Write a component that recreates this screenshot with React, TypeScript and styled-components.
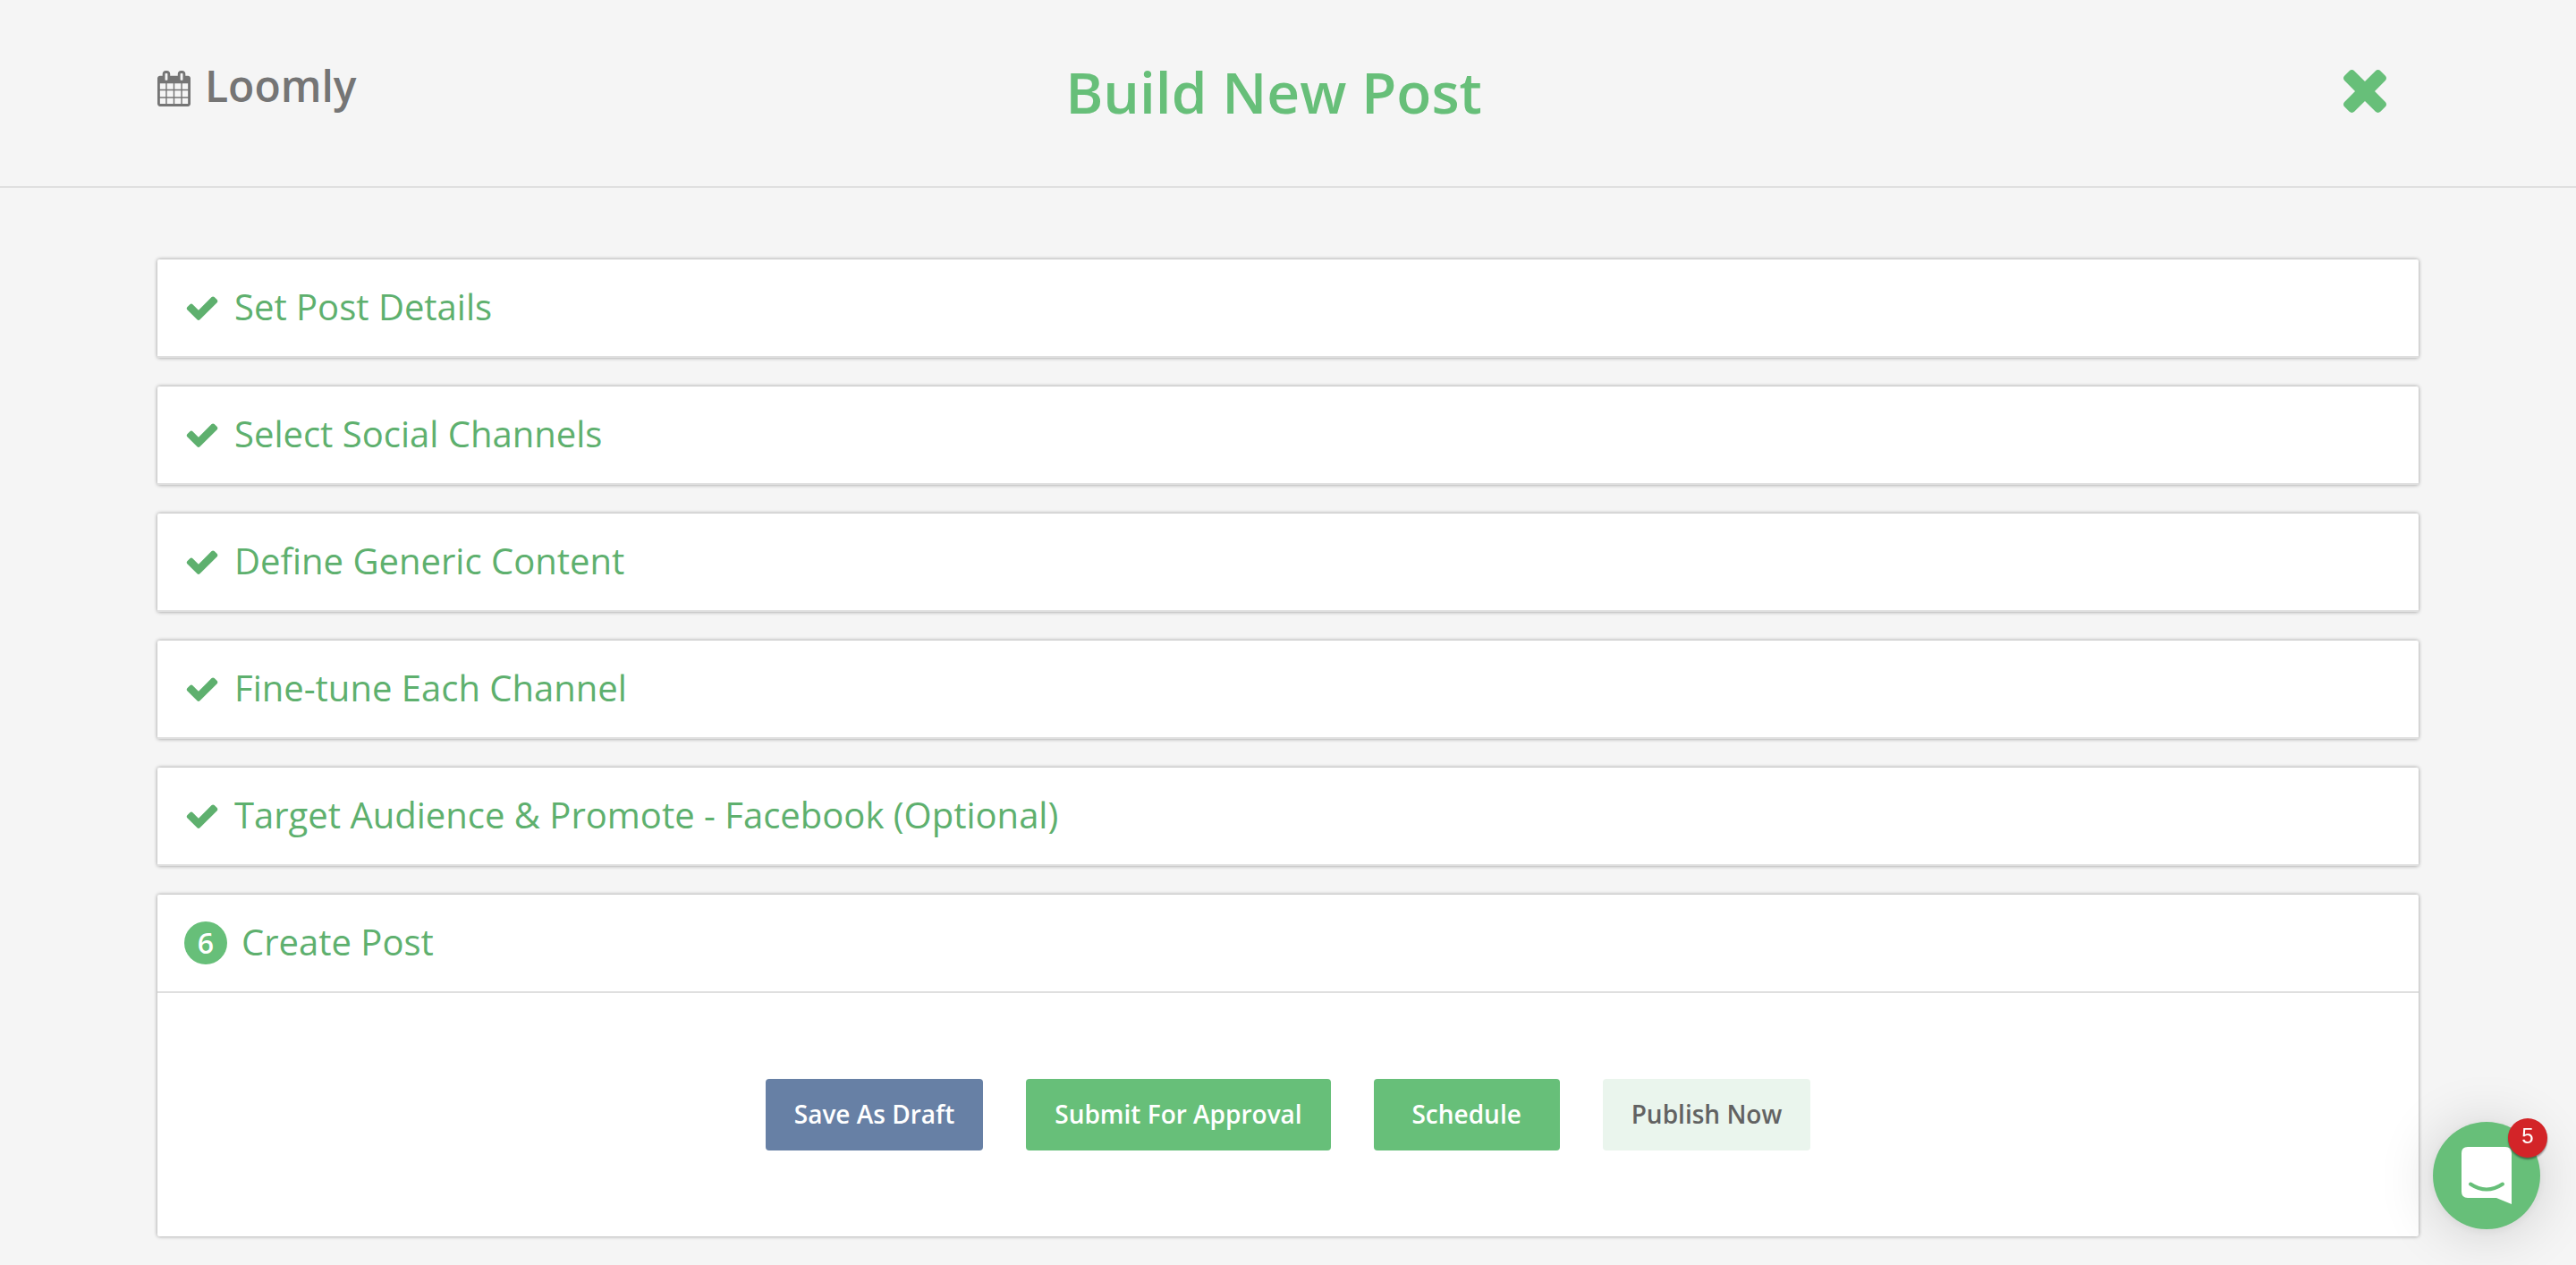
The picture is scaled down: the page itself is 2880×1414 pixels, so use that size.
import React from "react";
import styled, { createGlobalStyle } from "styled-components";

const GlobalStyle = createGlobalStyle`
  *, *::before, *::after { box-sizing: border-box; }
  body {
    margin: 0;
    background: #f5f5f5;
    font-family: "Open Sans", "Noto Sans", sans-serif;
    color: #5f5f5f;
  }
`;

const Header = styled.header`
  display: grid;
  grid-template-columns: 1fr auto 1fr;
  align-items: center;
  height: 210px;
  padding: 0 208px 4px 176px;
  border-bottom: 2px solid #dfdfdf;
`;

const Brand = styled.a`
  display: flex;
  align-items: center;
  gap: 16px;
  padding-bottom: 12px;
  font-size: 48px;
  line-height: 64px;
  font-weight: 600;
  color: #757575;
  text-decoration: none;

  svg {
    margin-top: 6px;
  }
`;

const Title = styled.h1`
  margin: 0;
  padding-top: 2px;
  font-size: 64px;
  line-height: 88px;
  font-weight: 600;
  color: #67bf79;
`;

const CloseButton = styled.button`
  justify-self: end;
  display: flex;
  padding: 0 4px;
  border: 0;
  background: none;
  color: #67bf79;
  cursor: pointer;
`;

const Steps = styled.main`
  display: flex;
  flex-direction: column;
  gap: 32px;
  padding: 80px 176px 32px;
`;

const Card = styled.section`
  background: #fff;
  border-radius: 2px;
  box-shadow: 0 0 4px rgba(0, 0, 0, 0.4);
`;

const StepHeader = styled.h2`
  display: flex;
  align-items: center;
  gap: 16px;
  height: 110px;
  margin: 0;
  padding: 0 30px;
  border-bottom: 2px solid #dfdfdf;
  font-size: 40px;
  line-height: 56px;
  font-weight: 400;
  color: #5eb06e;
`;

const StepLabel = styled.span`
  padding-bottom: 2px;
`;

const StepNumber = styled.span`
  display: flex;
  align-items: center;
  justify-content: center;
  width: 48px;
  height: 48px;
  border-radius: 50%;
  background: #67bf79;
  color: #fff;
  font-size: 32px;
  line-height: 48px;
  font-weight: 600;
`;

const Actions = styled.div`
  display: flex;
  justify-content: center;
  gap: 48px;
  padding: 96px 32px;
`;

type Tone = "draft" | "primary" | "muted";

const tones: Record<Tone, { background: string; color: string }> = {
  draft: { background: "#6780a5", color: "#fff" },
  primary: { background: "#67bf79", color: "#fff" },
  muted: { background: "#eaf5ed", color: "#626262" },
};

const ActionButton = styled.button<{ $tone: Tone }>`
  min-width: 208px;
  height: 80px;
  padding: 0 32px 2px;
  border: 0;
  border-radius: 4px;
  background: ${({ $tone }) => tones[$tone].background};
  color: ${({ $tone }) => tones[$tone].color};
  font-family: inherit;
  font-size: 28px;
  line-height: 40px;
  font-weight: 600;
  cursor: pointer;
`;

const ChatLauncher = styled.button`
  position: fixed;
  right: 40px;
  bottom: 40px;
  display: flex;
  align-items: center;
  justify-content: center;
  width: 120px;
  height: 120px;
  padding: 0;
  border: 0;
  border-radius: 50%;
  background: #67bf79;
  box-shadow: 0 2px 12px rgba(0, 0, 0, 0.06), 0 4px 64px rgba(0, 0, 0, 0.16);
  cursor: pointer;
`;

const UnreadBadge = styled.span`
  position: absolute;
  top: -4px;
  right: -8px;
  width: 44px;
  height: 44px;
  border-radius: 50%;
  background: #d32428;
  box-shadow: 0 2px 2px rgba(0, 0, 0, 0.4);
  color: #fff;
  font-family: "Liberation Sans", Arial, sans-serif;
  font-size: 24px;
  line-height: 40px;
  font-weight: 400;
  text-align: center;
`;

const CalendarIcon = () => (
  <svg width="37" height="40" viewBox="64 0 1664 1792" fill="currentColor" aria-hidden="true">
    <path d="M192 1664h288v-288h-288v288zm352 0h320v-288h-320v288zm-352-352h288v-320h-288v320zm352 0h320v-320h-320v320zm-352-384h288v-288h-288v288zm736 736h320v-288h-320v288zm-384-736h320v-288h-320v288zm768 736h288v-288h-288v288zm-384-352h320v-320h-320v320zm-352-864v-288q0-13-9.5-22.5t-22.5-9.5h-64q-13 0-22.5 9.5t-9.5 22.5v288q0 13 9.5 22.5t22.5 9.5h64q13 0 22.5-9.5t9.5-22.5zm736 864h288v-320h-288v320zm-384-384h320v-288h-320v288zm384 0h288v-288h-288v288zm32-480v-288q0-13-9.5-22.5t-22.5-9.5h-64q-13 0-22.5 9.5t-9.5 22.5v288q0 13 9.5 22.5t22.5 9.5h64q13 0 22.5-9.5t9.5-22.5zm384-64v1280q0 52-38 90t-90 38h-1408q-52 0-90-38t-38-90v-1280q0-52 38-90t90-38h128v-96q0-66 47-113t113-47h64q66 0 113 47t47 113v96h384v-96q0-66 47-113t113-47h64q66 0 113 47t47 113v96h128q52 0 90 38t38 90z" />
  </svg>
);

const CloseIcon = () => (
  <svg width="48" height="48" viewBox="302 366 1188 1188" fill="currentColor" aria-hidden="true">
    <path d="M1490 1322q0 40-28 68l-136 136q-28 28-68 28t-68-28l-294-294-294 294q-28 28-68 28t-68-28l-136-136q-28-28-28-68t28-68l294-294-294-294q-28-28-28-68t28-68l136-136q28-28 68-28t68 28l294 294 294-294q28-28 68-28t68 28l136 136q28 28 28 68t-28 68l-294 294 294 294q28 28 28 68z" />
  </svg>
);

const CheckIcon = () => (
  <svg width="40" height="40" viewBox="0 0 1792 1792" fill="currentColor" aria-hidden="true">
    <path d="M1671 566q0 40-28 68l-724 724-136 136q-28 28-68 28t-68-28l-136-136-362-362q-28-28-28-68t28-68l136-136q28-28 68-28t68 28l294 295 656-657q28-28 68-28t68 28l136 136q28 28 28 68z" />
  </svg>
);

const ChatIcon = () => (
  <svg width="56" height="64" viewBox="0 0 56 64" aria-hidden="true">
    <path
      d="M7 0H49Q56 0 56 7V64L39 57H7Q0 57 0 50V7Q0 0 7 0Z"
      fill="#fff"
    />
    <path
      d="M10 41.500Q28 53.500 46 41.500"
      fill="none"
      stroke="#67bf79"
      strokeWidth="4"
      strokeLinecap="round"
    />
  </svg>
);

const completedSteps = [
  "Set Post Details",
  "Select Social Channels",
  "Define Generic Content",
  "Fine-tune Each Channel",
  "Target Audience & Promote - Facebook (Optional)",
];

const actions: { label: string; tone: Tone }[] = [
  { label: "Save As Draft", tone: "draft" },
  { label: "Submit For Approval", tone: "primary" },
  { label: "Schedule", tone: "primary" },
  { label: "Publish Now", tone: "muted" },
];

export default function App() {
  return (
    <>
      <GlobalStyle />
      <Header>
        <Brand href="#">
          <CalendarIcon />
          Loomly
        </Brand>
        <Title>Build New Post</Title>
        <CloseButton type="button" aria-label="Close">
          <CloseIcon />
        </CloseButton>
      </Header>
      <Steps>
        {completedSteps.map((step) => (
          <Card key={step}>
            <StepHeader>
              <CheckIcon />
              <StepLabel>{step}</StepLabel>
            </StepHeader>
          </Card>
        ))}
        <Card>
          <StepHeader>
            <StepNumber>6</StepNumber>
            <StepLabel>Create Post</StepLabel>
          </StepHeader>
          <Actions>
            {actions.map(({ label, tone }) => (
              <ActionButton key={label} type="button" $tone={tone}>
                {label}
              </ActionButton>
            ))}
          </Actions>
        </Card>
      </Steps>
      <ChatLauncher type="button" aria-label="Open chat, 5 unread messages">
        <ChatIcon />
        <UnreadBadge>5</UnreadBadge>
      </ChatLauncher>
    </>
  );
}
